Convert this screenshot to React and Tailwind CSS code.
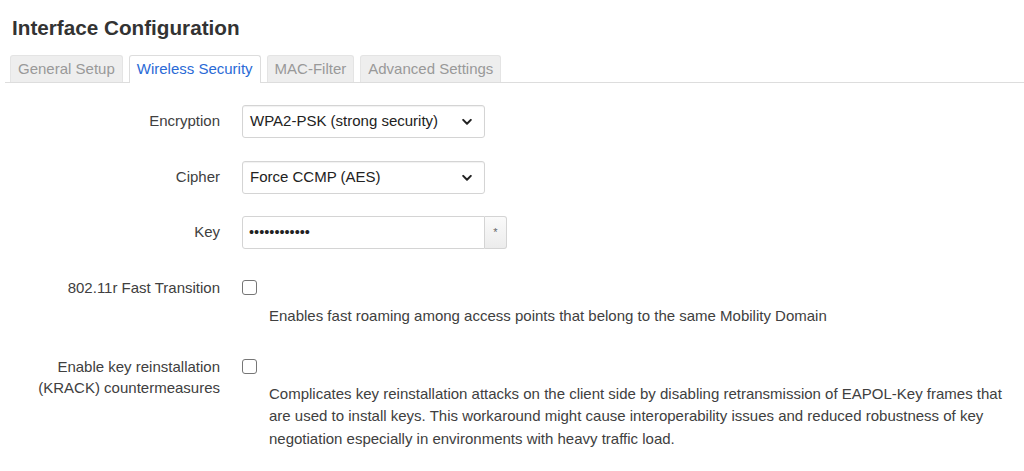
import { useState } from 'react'

const tabs = ['General Setup', 'Wireless Security', 'MAC-Filter', 'Advanced Settings']

function Chevron() {
  return (
    <svg width="10" height="7" viewBox="0 0 10 7" className="absolute right-[12px] top-1/2 -translate-y-1/2 pointer-events-none">
      <path d="M1.2 1.4 L5 5.2 L8.8 1.4" fill="none" stroke="#222" strokeWidth="2" strokeLinecap="round" strokeLinejoin="round" />
    </svg>
  )
}

function SelectBox({ value }) {
  return (
    <div className="relative w-[243px] h-[33px] border border-[#d4d4d4] rounded-[3px] bg-white shadow-[inset_0_1px_1px_rgba(0,0,0,0.06)] flex items-center pl-[7px] text-[15px] text-[#222]">
      {value}
      <Chevron />
    </div>
  )
}

function Checkbox({ checked, onChange }) {
  return (
    <button
      type="button"
      onClick={onChange}
      className={`w-[15px] h-[15px] rounded-[3px] border ${checked ? 'bg-[#2a6ad6] border-[#2a6ad6]' : 'bg-white border-[#767676]'}`}
    />
  )
}

export default function App() {
  const [active, setActive] = useState(1)
  const [ft, setFt] = useState(false)
  const [krack, setKrack] = useState(false)

  return (
    <div className="w-[1024px] h-[471px] overflow-hidden bg-white text-[#404040] text-[15px]" style={{ fontFamily: '"Liberation Sans", Arial, sans-serif' }}>
      <h2 className="pl-[12px] pt-[16px] text-[20.7px] leading-[24px] font-bold text-[#333]">Interface Configuration</h2>

      {/* tabs */}
      <ul className="mt-[15px] ml-[5px] pl-[5px] flex gap-[6px] border-b border-[#ddd]">
        {tabs.map((t, i) => (
          <li
            key={t}
            onClick={() => setActive(i)}
            className={`h-[27px] px-[7px] flex items-center rounded-t-[3px] border border-b-0 -mb-px cursor-pointer ${
              active === i ? 'bg-white border-[#ddd] text-[#2a6ad6] h-[28px]' : 'bg-[#eee] border-[#e4e4e4] text-[#999] mb-0'
            }`}
          >
            {t}
          </li>
        ))}
      </ul>

      {/* form */}
      <div className="pt-[22px]">
        <div className="flex items-center">
          <label className="w-[220px] text-right">Encryption</label>
          <div className="ml-[22px]">
            <SelectBox value="WPA2-PSK (strong security)" />
          </div>
        </div>

        <div className="flex items-center mt-[23px]">
          <label className="w-[220px] text-right">Cipher</label>
          <div className="ml-[22px]">
            <SelectBox value="Force CCMP (AES)" />
          </div>
        </div>

        <div className="flex items-center mt-[22px]">
          <label className="w-[220px] text-right">Key</label>
          <div className="ml-[22px] flex">
            <div className="w-[243px] h-[33px] border border-[#d4d4d4] rounded-l-[3px] bg-white flex items-center pl-[6px] text-[#222] text-[14.5px]">
              ••••••••••••
            </div>
            <div className="w-[22px] h-[33px] border border-l-0 border-[#d4d4d4] rounded-r-[3px] bg-gradient-to-b from-[#fafafa] to-[#ececec] flex items-center justify-center text-[11px] text-[#666]">
              *
            </div>
          </div>
        </div>

        <div className="flex mt-[28px]">
          <label className="w-[220px] text-right leading-[21px]">802.11r Fast Transition</label>
          <div className="ml-[22px] w-[770px]">
            <div className="h-[21px] flex items-center">
              <Checkbox checked={ft} onChange={() => setFt(!ft)} />
            </div>
            <p className="mt-[7px] ml-[27px] leading-[22.5px]">
              Enables fast roaming among access points that belong to the same Mobility Domain
            </p>
          </div>
        </div>

        <div className="flex mt-[28px]">
          <label className="w-[220px] text-right leading-[21px]">
            Enable key reinstallation
            <br />
            (KRACK) countermeasures
          </label>
          <div className="ml-[22px] w-[770px]">
            <div className="h-[21px] flex items-center">
              <Checkbox checked={krack} onChange={() => setKrack(!krack)} />
            </div>
            <p className="mt-[6px] ml-[27px] leading-[22.5px]">
              Complicates key reinstallation attacks on the client side by disabling retransmission of EAPOL-Key frames that
              are used to install keys. This workaround might cause interoperability issues and reduced robustness of key
              negotiation especially in environments with heavy traffic load.
            </p>
          </div>
        </div>
      </div>
    </div>
  )
}
